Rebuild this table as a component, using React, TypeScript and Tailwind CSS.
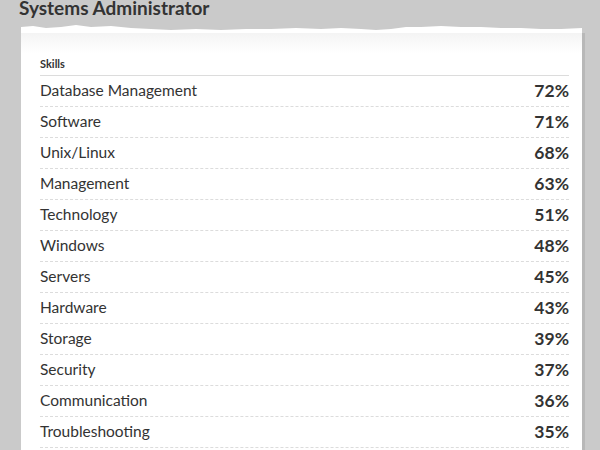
import React from "react";

const skills = [
  { name: "Database Management", pct: 72 },
  { name: "Software", pct: 71 },
  { name: "Unix/Linux", pct: 68 },
  { name: "Management", pct: 63 },
  { name: "Technology", pct: 51 },
  { name: "Windows", pct: 48 },
  { name: "Servers", pct: 45 },
  { name: "Hardware", pct: 43 },
  { name: "Storage", pct: 39 },
  { name: "Security", pct: 37 },
  { name: "Communication", pct: 36 },
  { name: "Troubleshooting", pct: 35 },
];

// torn paper edge along the top of the card
const TornEdge = () => (
  <svg className="block w-full h-[10px]" viewBox="0 0 561 10" preserveAspectRatio="none">
    <path
      d="M0 4 L12 3 L25 5 L40 4 L55 2 L70 4 L90 3 L110 5 L130 6 L150 7 L175 6 L200 7 L225 6 L250 6 L275 5 L300 6 L320 5 L340 6 L355 7 L370 6 L385 4 L400 4 L420 3 L440 4 L460 4 L480 5 L500 5 L520 6 L540 6 L561 5 L561 10 L0 10 Z"
      fill="#ffffff"
    />
  </svg>
);

const App = () => {
  return (
    <div className="w-[600px] h-[450px] overflow-hidden bg-[#cacaca] font-['Lato',sans-serif] text-[#333]">
      <h1 className="pl-[19px] -mt-[6px] text-[19px] font-bold leading-[28px] text-[#333]">
        Systems Administrator
      </h1>
      <div className="ml-[21px] w-[564px] mt-[1px]">
        <div className="w-[561px]">
          <TornEdge />
        </div>
        <div className="w-[564px] border-r-[3px] border-[#b8b8b8]">
          <div className="bg-gradient-to-b from-[#f4f4f4] to-white to-[20px] pl-[19px] pr-[13px] pt-[24px] pb-[20px]">
            <div className="text-[11px] font-bold leading-[14px] pb-[4px] border-b border-[#dcdcdc]">Skills</div>
            {skills.map((s) => (
              <div
                key={s.name}
                className="flex items-center justify-between h-[31px] border-b border-dashed border-[#dcdcdc]"
              >
                <span className="text-[15.5px] text-[#333]">{s.name}</span>
                <span className="text-[17.5px] font-bold text-[#333]">{s.pct}%</span>
              </div>
            ))}
          </div>
        </div>
      </div>
    </div>
  );
};

export default App;
